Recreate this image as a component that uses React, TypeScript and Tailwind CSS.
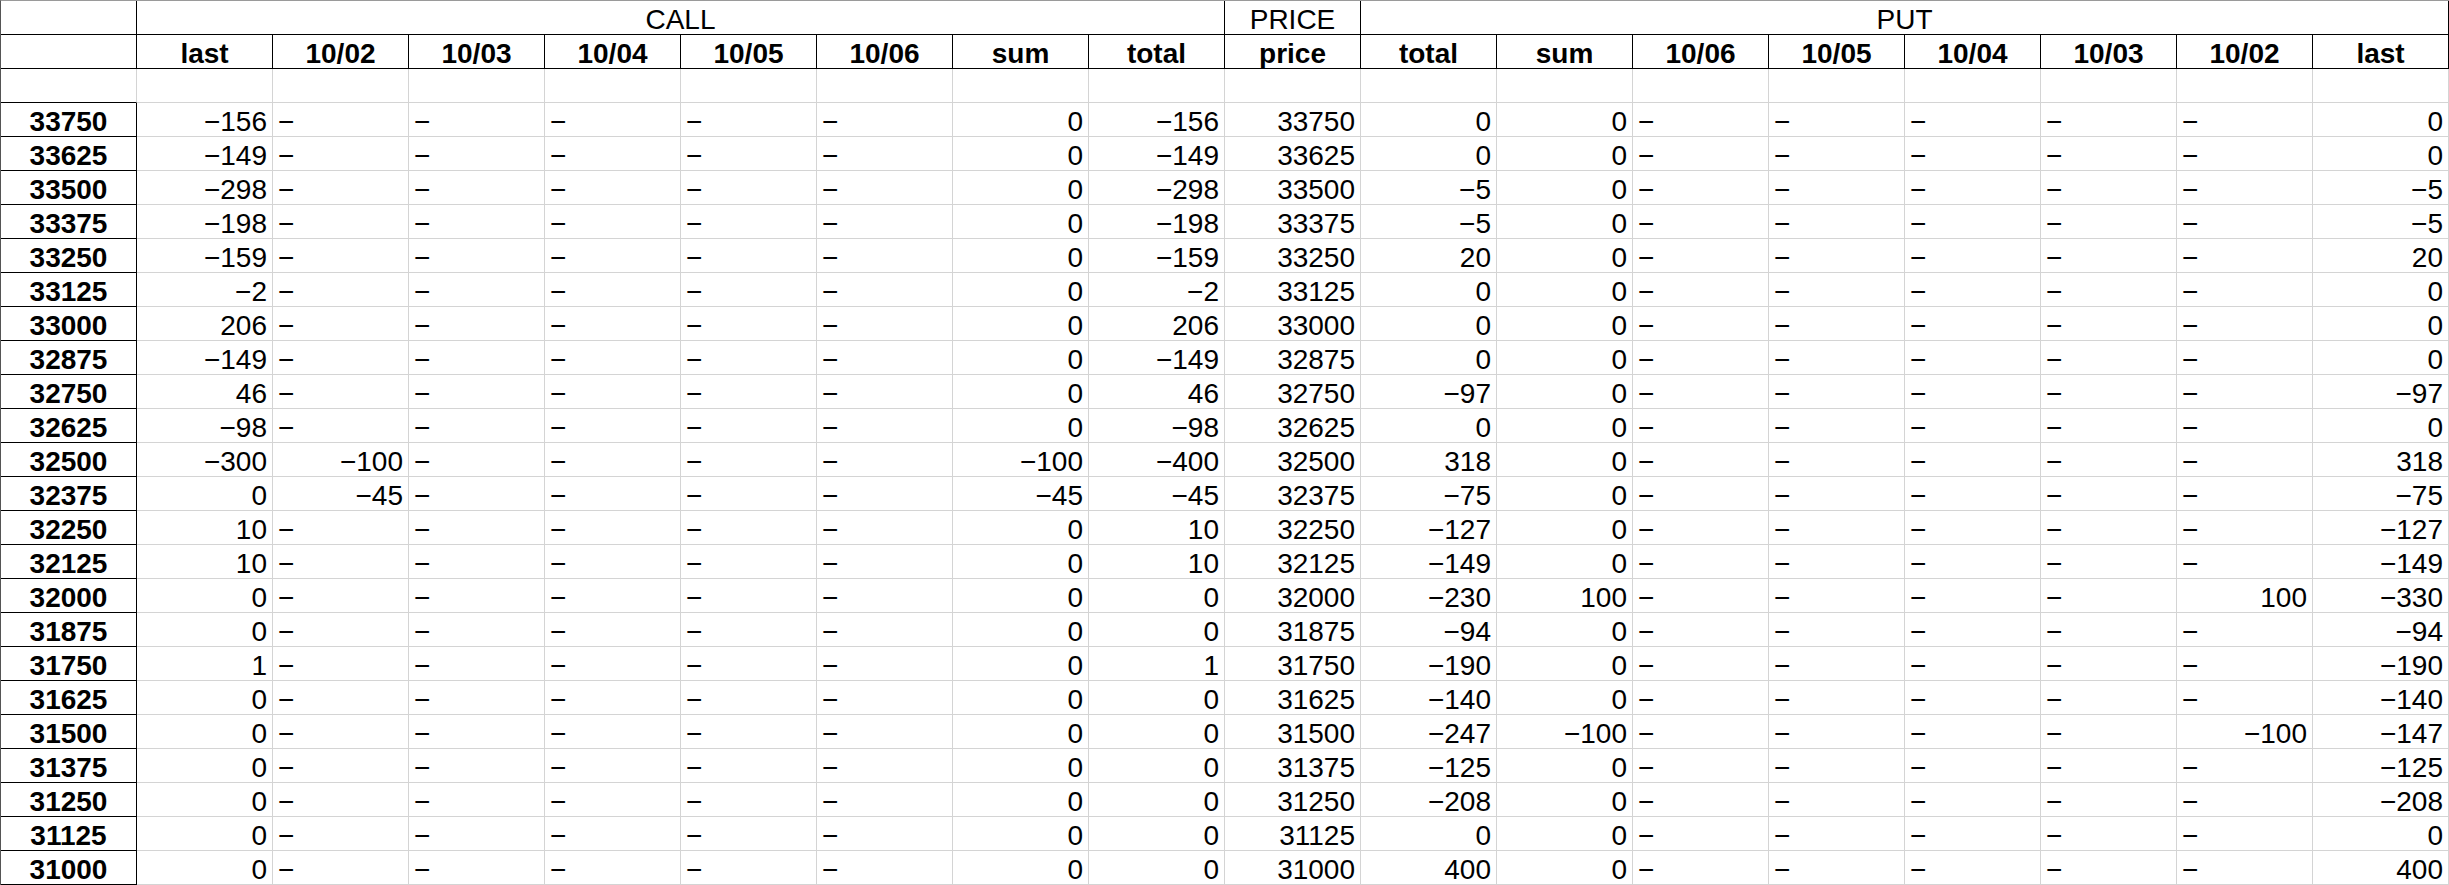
import React from "react";

type Cell = number | null;

type Row = {
  strike: number;
  call: Cell[]; // last, 10/02, 10/03, 10/04, 10/05, 10/06, sum, total
  put: Cell[]; // total, sum, 10/06, 10/05, 10/04, 10/03, 10/02, last
};

const mk = (
  strike: number,
  cLast: number,
  cSum: number,
  cTotal: number,
  pTotal: number,
  pSum: number,
  pLast: number,
  c1002: Cell = null,
  p1002: Cell = null
): Row => ({
  strike,
  call: [cLast, c1002, null, null, null, null, cSum, cTotal],
  put: [pTotal, pSum, null, null, null, null, p1002, pLast],
});

const rows: Row[] = [
  mk(33750, -156, 0, -156, 0, 0, 0),
  mk(33625, -149, 0, -149, 0, 0, 0),
  mk(33500, -298, 0, -298, -5, 0, -5),
  mk(33375, -198, 0, -198, -5, 0, -5),
  mk(33250, -159, 0, -159, 20, 0, 20),
  mk(33125, -2, 0, -2, 0, 0, 0),
  mk(33000, 206, 0, 206, 0, 0, 0),
  mk(32875, -149, 0, -149, 0, 0, 0),
  mk(32750, 46, 0, 46, -97, 0, -97),
  mk(32625, -98, 0, -98, 0, 0, 0),
  mk(32500, -300, -100, -400, 318, 0, 318, -100),
  mk(32375, 0, -45, -45, -75, 0, -75, -45),
  mk(32250, 10, 0, 10, -127, 0, -127),
  mk(32125, 10, 0, 10, -149, 0, -149),
  mk(32000, 0, 0, 0, -230, 100, -330, null, 100),
  mk(31875, 0, 0, 0, -94, 0, -94),
  mk(31750, 1, 0, 1, -190, 0, -190),
  mk(31625, 0, 0, 0, -140, 0, -140),
  mk(31500, 0, 0, 0, -247, -100, -147, null, -100),
  mk(31375, 0, 0, 0, -125, 0, -125),
  mk(31250, 0, 0, 0, -208, 0, -208),
  mk(31125, 0, 0, 0, 0, 0, 0),
  mk(31000, 0, 0, 0, 400, 0, 400),
];

const callHeads = ["last", "10/02", "10/03", "10/04", "10/05", "10/06", "sum", "total"];
const putHeads = ["total", "sum", "10/06", "10/05", "10/04", "10/03", "10/02", "last"];

const base = "h-[34px] flex items-end leading-none whitespace-nowrap overflow-hidden";
const gray = "border-r border-b border-[#d4d4d4]";
const black = "border-r border-b border-black";

const fmt = (v: number) => (v < 0 ? `\u2212${Math.abs(v)}` : `${v}`);

const NumCell = ({ v }: { v: Cell }) =>
  v === null ? (
    <div className={`${base} ${gray} justify-start pl-[5px]`}>{"\u2212"}</div>
  ) : (
    <div className={`${base} ${gray} justify-end pr-[5px]`}>{fmt(v)}</div>
  );

export default function App() {
  return (
    <div className="w-[2449px] bg-white text-black text-[28px] font-['Liberation_Sans',Arial,sans-serif]">
      <div className="grid grid-cols-[repeat(18,136px)] border-t border-l border-t-[#9a9a9a] border-l-[#555]">
        {/* header row 1 */}
        <div className={`${base} ${black}`} />
        <div className={`${base} ${black} col-span-8 justify-center`}>CALL</div>
        <div className={`${base} ${black} justify-center`}>PRICE</div>
        <div className={`${base} ${black} col-span-8 justify-center`}>PUT</div>

        {/* header row 2 */}
        <div className={`${base} ${black}`} />
        {callHeads.map((h, i) => (
          <div key={`c${i}`} className={`${base} ${black} justify-center font-bold`}>
            {h}
          </div>
        ))}
        <div className={`${base} ${black} justify-center font-bold`}>price</div>
        {putHeads.map((h, i) => (
          <div key={`p${i}`} className={`${base} ${black} justify-center font-bold`}>
            {h}
          </div>
        ))}

        {/* blank row */}
        <div className={`${base} border-r border-b border-r-[#d4d4d4] border-b-black`} />
        {Array.from({ length: 17 }).map((_, i) => (
          <div key={`b${i}`} className={`${base} ${gray}`} />
        ))}

        {/* data */}
        {rows.map((r) => (
          <React.Fragment key={r.strike}>
            <div className={`${base} ${black} justify-center font-bold`}>{r.strike}</div>
            {r.call.map((v, i) => (
              <NumCell key={`c${i}`} v={v} />
            ))}
            <div className={`${base} ${gray} justify-end pr-[5px]`}>{r.strike}</div>
            {r.put.map((v, i) => (
              <NumCell key={`p${i}`} v={v} />
            ))}
          </React.Fragment>
        ))}
      </div>
    </div>
  );
}
